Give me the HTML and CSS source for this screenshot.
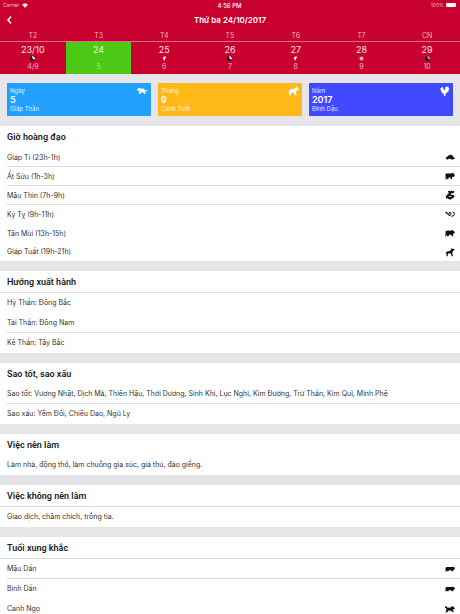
FILE: index.html
```html
<!DOCTYPE html>
<html lang="vi">
<head>
<meta charset="utf-8">
<meta name="viewport" content="width=device-width, initial-scale=1">
<title>Thứ ba 24/10/2017</title>
<link rel="stylesheet" href="styles.css">
</head>
<body>
<svg class="sprite" aria-hidden="true">
  <symbol id="rat" viewBox="0 0 30 21"><path d="M1 14Q4 9 8 9Q12 3 18 4Q25 6 26 11L30 15L25 17L23 18H18L17 16H11L9 18H4L5 15Z"/></symbol>
  <symbol id="ox" viewBox="0 0 30 21"><path d="M2 3L7 3H19L22 1L24 3L28 1L27 6L30 10L27 13L23 13L21 15V20H17L16 15H11L10 20H6L5 16L4 20H1L2 11V7L0 12Z"/></symbol>
  <symbol id="dragon" viewBox="0 0 30 30"><path d="M9 2L17 4L20 1L22 4L29 3L26 9L20 10L14 14Q28 13 28 19Q27 26 17 26L20 29L12 28L8 25L2 26L4 21L1 17L8 16L10 19Q18 22 21 19Q19 17 8 17Q3 12 14 9L9 7Z"/></symbol>
  <symbol id="snake" viewBox="0 0 30 21"><path class="outline" d="M2 5Q3 11 7 9Q7 4 3 5M8 9Q9 15 14 15Q19 14 18 8Q15 3 12 7Q10 13 15 16M19 17Q27 19 28 11Q28 4 22 4"/></symbol>
  <symbol id="goat" viewBox="0 0 30 21"><path d="M1 7Q4 2 9 3L18 4L21 1L24 3L28 6L30 10L26 12L24 14L25 20H20L19 16H12L11 20H6L5 16L3 20H0L2 13Z"/></symbol>
  <symbol id="dog" viewBox="0 0 30 30"><path d="M2 17Q6 12 12 13L18 9L20 3L23 5L29 7L28 10L24 11L22 18L24 28H20L18 20L11 19L8 23L9 28H5L4 22L6 17L2 20Z"/></symbol>
  <symbol id="tiger" viewBox="0 0 30 18"><path d="M1 5L6 3H20L24 2L28 4L30 9L25 12L25 16H20L19 13H12L10 16H6L6 13L4 16H0L2 11Z"/></symbol>
  <symbol id="horse" viewBox="0 0 30 21"><path d="M0 2L5 3L8 7L17 6L22 1L25 4L30 8L27 12L24 11L23 14L27 19L23 20L18 16L11 15L7 20H1L4 15L4 9L0 7Z"/></symbol>
  <symbol id="monkey" viewBox="0 0 36 22"><path d="M0 5L5 1L10 2L13 4L21 3L26 7L36 11L35 13L26 12L26 15L29 20L23 21L20 15L15 14L11 21L5 20L9 13L8 10L5 9L3 12L0 11L3 8Z"/></symbol>
  <symbol id="hound" viewBox="0 0 30 28"><path d="M1 17L7 9L17 8L21 4L24 1L26 5L30 7L28 11L24 13L22 18L24 26H19L17 19L11 19L8 21L8 26H3L3 19L5 16L1 19Z"/></symbol>
  <symbol id="rooster" viewBox="0 0 30 30"><path d="M1 8L6 5L8 2L12 6L11 10L14 12L17 10L17 5L20 1L23 3L27 1L27 6L30 10L27 12L27 17L23 19L21 22L17 24V26L20 29H13V24L8 21L4 14L4 10Z"/></symbol>
</svg>

<header class="top">
  <div class="status">
    <span class="carrier">Carrier
      <svg class="wifi" viewBox="0 0 16 12" aria-hidden="true"><path d="M8 12L0 4Q8 -3 16 4Z"/></svg>
    </span>
    <span class="clock">4:56 PM</span>
    <span class="power">100%<span class="battery"></span></span>
  </div>
  <nav class="bar">
    <button class="back" type="button" aria-label="Quay lại"><svg viewBox="0 0 10 16" aria-hidden="true"><path d="M8 1L2 8L8 15"/></svg></button>
    <h1>Thứ ba 24/10/2017</h1>
  </nav>
  <div class="week names"><span>T2</span><span>T3</span><span>T4</span><span>T5</span><span>T6</span><span>T7</span><span>CN</span></div>
  <div class="week days">
    <button type="button"><b>23/10</b><svg class="moon" viewBox="0 0 10 10" aria-hidden="true"><circle class="dark" cx="5" cy="5" r="5"/><path d="M4 0Q9 0 10 5L8 8Q7 5 5 5Z"/></svg><i>4/9</i></button>
    <button type="button" class="current"><b>24</b><span class="moon"></span><i>5</i></button>
    <button type="button"><b>25</b><svg class="moon" viewBox="0 0 10 10" aria-hidden="true"><path d="M2 3Q5 0 9 2L6 5Q7 8 5 9Q1 7 2 3Z"/></svg><i>6</i></button>
    <button type="button"><b>26</b><svg class="moon" viewBox="0 0 10 10" aria-hidden="true"><circle class="dark" cx="5" cy="5" r="5"/><path d="M4 0Q9 0 10 5L8 8Q7 5 5 5Z"/></svg><i>7</i></button>
    <button type="button"><b>27</b><svg class="moon" viewBox="0 0 10 10" aria-hidden="true"><path d="M2 3Q5 0 9 2L6 5Q7 8 5 9Q1 7 2 3Z"/></svg><i>8</i></button>
    <button type="button"><b>28</b><svg class="moon" viewBox="0 0 10 10" aria-hidden="true"><circle class="full" cx="5" cy="5" r="4"/></svg><i>9</i></button>
    <button type="button"><b>29</b><svg class="moon" viewBox="0 0 10 10" aria-hidden="true"><circle class="dark" cx="5" cy="5" r="5"/><path class="dim" d="M5 0Q9 0 10 5L8 8Q7 5 5 4Z"/></svg><i>10</i></button>
  </div>
</header>

<main>
  <div class="cards">
    <article class="card day"><span>Ngày</span><strong>5</strong><span>Giáp Thân</span><svg class="sign"><use href="#monkey"/></svg></article>
    <article class="card month"><span>Tháng</span><strong>9</strong><span>Canh Tuất</span><svg class="sign"><use href="#hound"/></svg></article>
    <article class="card year"><span>Năm</span><strong>2017</strong><span>Đinh Dậu</span><svg class="sign"><use href="#rooster"/></svg></article>
  </div>

  <section class="group compact">
    <h2>Giờ hoàng đạo</h2>
    <ul>
      <li class="line">Giáp Tí (23h-1h)<svg><use href="#rat"/></svg></li>
      <li class="line">Ất Sửu (1h-3h)<svg><use href="#ox"/></svg></li>
      <li class="line">Mậu Thìn (7h-9h)<svg><use href="#dragon"/></svg></li>
      <li>Kỷ Tỵ (9h-11h)<svg><use href="#snake"/></svg></li>
      <li>Tân Mùi (13h-15h)<svg><use href="#goat"/></svg></li>
      <li>Giáp Tuất (19h-21h)<svg><use href="#dog"/></svg></li>
    </ul>
  </section>

  <section class="group ruled">
    <h2>Hướng xuất hành</h2>
    <ul>
      <li>Hỷ Thần: Đông Bắc</li>
      <li class="line">Tài Thần: Đông Nam</li>
      <li>Kê Thần: Tây Bắc</li>
    </ul>
  </section>

  <section class="group">
    <h2>Sao tốt, sao xấu</h2>
    <ul>
      <li class="line">Sao tốt: Vương Nhật, Dịch Mã, Thiên Hậu, Thời Dương, Sinh Khí, Lục Nghi, Kim Đường, Trừ Thần, Kim Quĩ, Minh Phệ</li>
      <li>Sao xấu: Yếm Đối, Chiêu Dao, Ngũ Ly</li>
    </ul>
  </section>

  <section class="group">
    <h2>Việc nên làm</h2>
    <ul><li>Làm nhà, động thổ, làm chuồng gia súc, giá thú, đào giếng.</li></ul>
  </section>

  <section class="group ruled">
    <h2>Việc không nên làm</h2>
    <ul><li>Giao dịch, châm chích, trồng tỉa.</li></ul>
  </section>

  <section class="group ruled">
    <h2>Tuổi xung khắc</h2>
    <ul>
      <li class="line">Mậu Dần<svg><use href="#tiger"/></svg></li>
      <li>Bính Dần<svg><use href="#tiger"/></svg></li>
      <li>Canh Ngọ<svg><use href="#horse"/></svg></li>
    </ul>
  </section>
</main>
</body>
</html>
```
FILE: styles.css
```css
* { box-sizing: border-box; }

body {
  margin: 0;
  background: #e6e5ea;
  color: #333;
  font-family: Inter, "Liberation Sans", sans-serif;
  font-size: 7px;
}

button { padding: 0; border: 0; background: none; color: inherit; font: inherit; }

.sprite { position: absolute; width: 0; height: 0; }
.outline { fill: none; stroke: currentColor; stroke-width: 3; }

.top { background: #c8002f; color: #fff; }

.status {
  display: grid;
  grid-template-columns: 1fr auto 1fr;
  align-items: center;
  height: 10px;
  padding: 0 4px 0 3px;
  font-size: 5px;
}
.carrier, .power { display: flex; align-items: center; gap: 3px; }
.carrier { color: #f5c3cf; }
.power { justify-content: flex-end; gap: 2px; color: #f5c3cf; }
.clock { font-weight: 500; font-size: 6px; }
.wifi { width: 6px; height: 5px; fill: #fff; }
.battery { width: 10px; height: 4px; border-radius: 1px; background: #fff; }

.bar {
  display: grid;
  grid-template-columns: 20px 1fr 20px;
  align-items: center;
  height: 20px;
}
.back { display: flex; padding-left: 7px; }
.back svg { width: 5px; height: 8px; fill: none; stroke: #fff; stroke-width: 3; }
h1 { margin: 0; font-size: 8px; font-weight: 600; text-align: center; }

.week { display: grid; grid-template-columns: repeat(7, 1fr); text-align: center; }
.names {
  height: 12px;
  border-bottom: 1px solid #df6f88;
  color: #f2b5c3;
  line-height: 12px;
}
.days button {
  display: flex;
  flex-direction: column;
  align-items: center;
  height: 32px;
  padding-top: 2px;
}
.days b { color: #fbe4e9; font-size: 9px; font-weight: 400; line-height: 12px; }
.days i { color: #f2b5c3; font-size: 7px; font-style: normal; line-height: 8px; }
.moon { width: 5px; height: 5px; margin: 0 0 2px; fill: #fff; }
.dark { fill: #151515; }
.full { fill: #e8b9a9; }
.dim { fill: #c9b3b8; }
.days .current { background: #4bc914; }
.current b { color: #e8ffd9; }
.current i { color: #a6ee80; }

.cards {
  display: grid;
  grid-template-columns: repeat(3, 1fr);
  gap: 7px;
  padding: 9px 7px 10px;
}
.card {
  position: relative;
  display: flex;
  flex-direction: column;
  height: 33px;
  padding: 3px;
  border-radius: 1px;
  color: #fff;
}
.card span { font-size: 6px; line-height: 9px; opacity: 0.85; }
.card strong { font-size: 9px; font-weight: 600; line-height: 9px; }
.day { background: #23a0fb; }
.month { background: #feb919; }
.year { background: #4049ff; }
.sign { position: absolute; top: 3px; right: 3px; width: 11px; height: 10px; fill: #fff; }

.group { margin-bottom: 10px; background: #fff; }
h2 {
  height: 21px;
  margin: 0;
  padding: 1px 0 0 7px;
  color: #1c1c1c;
  font-family: Roboto, Inter, sans-serif;
  font-size: 9px;
  font-weight: 600;
  line-height: 20px;
}
.ruled h2 { height: 22px; border-bottom: 1px solid #dcdcde; }
.compact h2 { height: 22px; }

ul { margin: 0; padding: 0 0 0 7px; list-style: none; }
li {
  display: flex;
  align-items: center;
  justify-content: space-between;
  min-height: 20px;
  padding-right: 5px;
  border-bottom: 1px solid transparent;
}
.compact li { min-height: 19px; }
.compact li:last-child { min-height: 18px; }
li.line { border-bottom-color: #dcdcde; }
li svg { flex: none; width: 10px; height: 10px; fill: #111; color: #111; }
```
